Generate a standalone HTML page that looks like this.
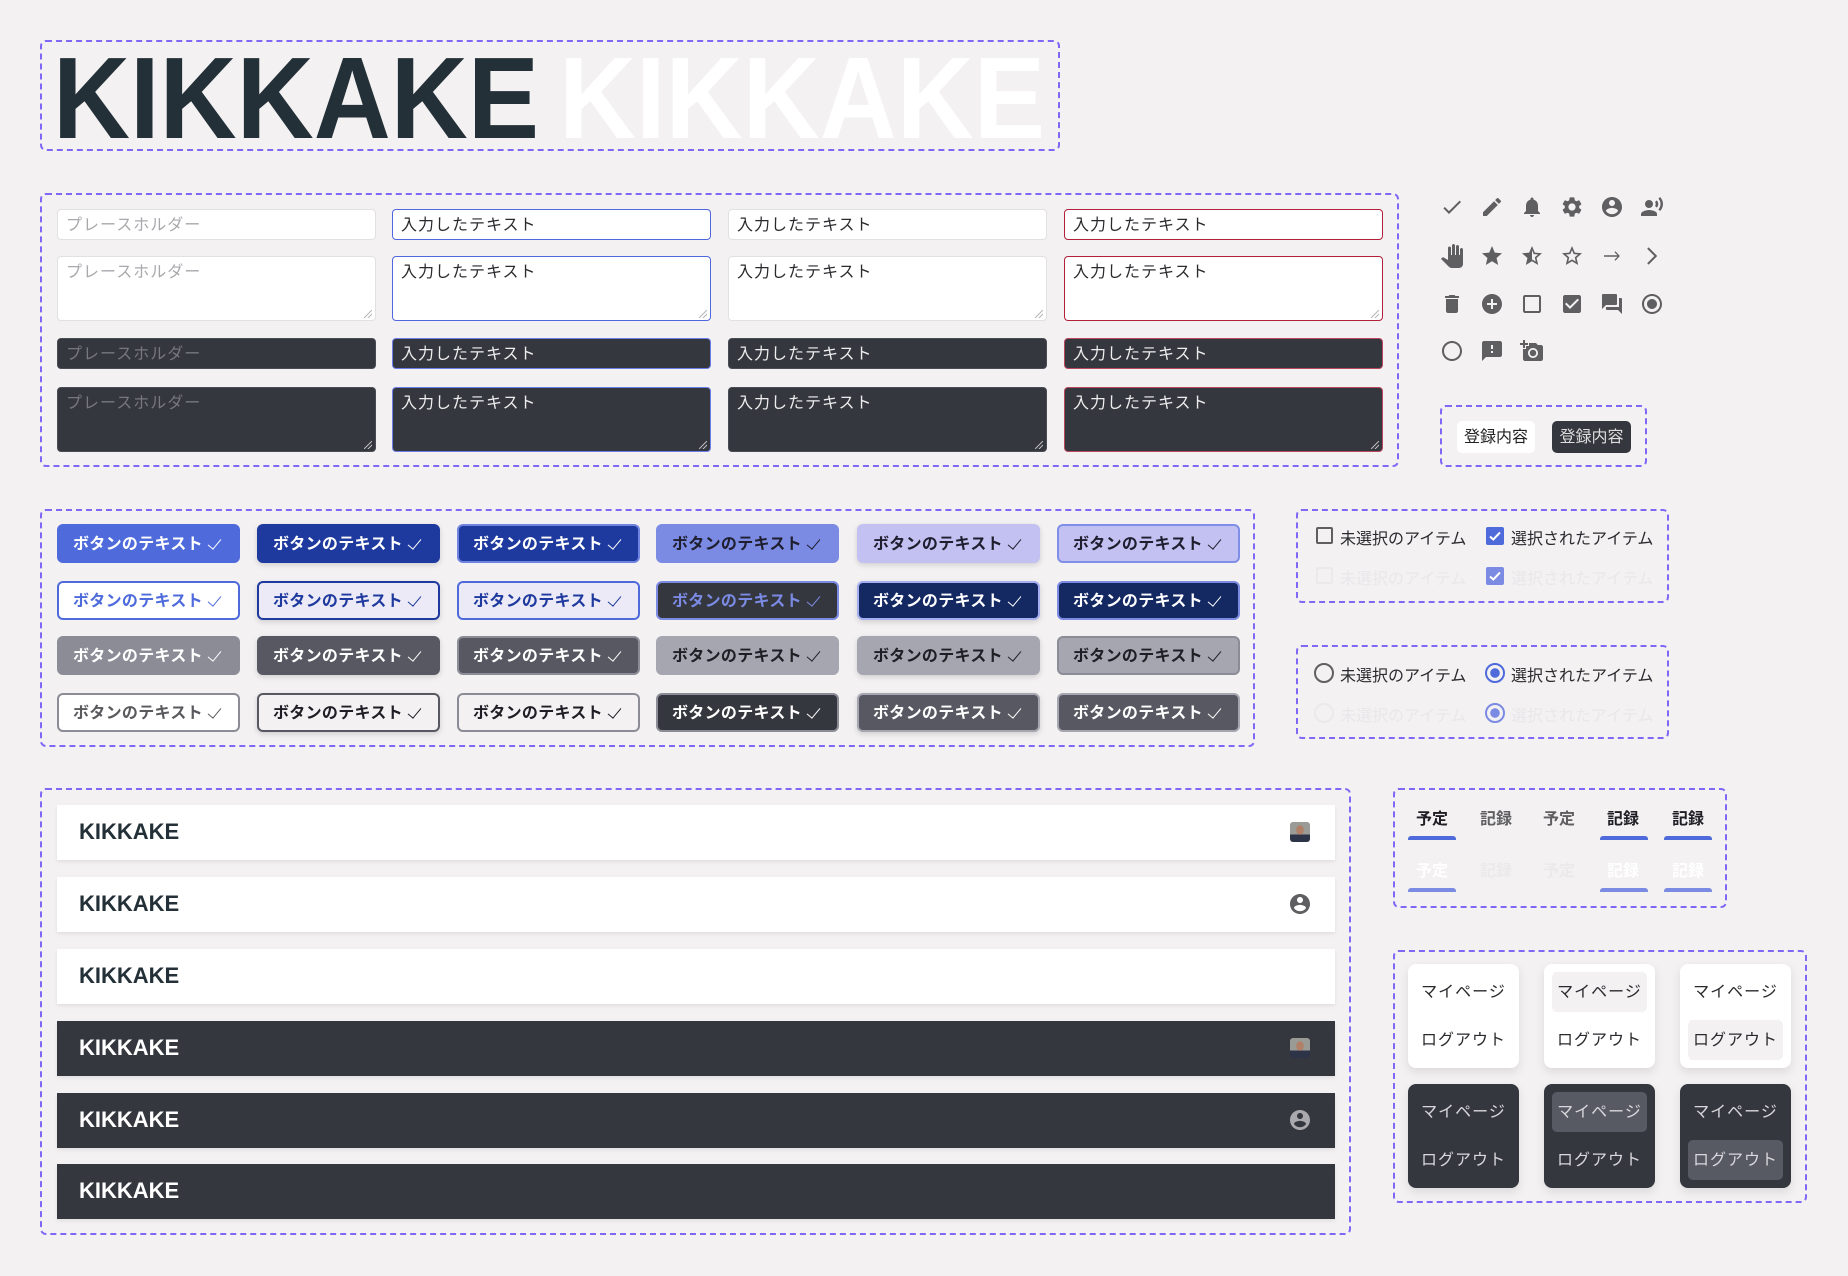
<!DOCTYPE html>
<html><head><meta charset="utf-8"><style>
*{box-sizing:border-box;margin:0;padding:0}
body{width:1848px;height:1276px;background:#f3f1f2;position:relative;overflow:hidden;font-family:"Liberation Sans","Noto Sans CJK JP",sans-serif;color:#1f1f24}
.a{position:absolute}
.box{position:absolute;border:2px dashed #8068f7;border-radius:6px}
.in{position:absolute;width:319px;height:31px;background:#fff;border:1.5px solid #e2e0e2;border-radius:4px;font-size:16px;line-height:18px;padding:7px 8px;color:#2a2a2e;letter-spacing:1px}
.ta{height:65px}
.ph{color:#a9a9ad}
.dk{background:#35373f;border-color:#4a4c55;color:#eee}
.dk.ph{color:#77787f}
.blue{border-color:#5068de}.red{border-color:#b3203a}
.dk.blue{border-color:#6b7de6}.dk.red{border-color:#b9485f}
.rz{position:absolute;right:3px;bottom:2px;width:8px;height:8px;background:linear-gradient(135deg,transparent 45%,#b8b8b8 45%,#b8b8b8 55%,transparent 55%,transparent 70%,#b8b8b8 70%,#b8b8b8 80%,transparent 80%)}
.ic{position:absolute;width:24px;height:24px;fill:#5f5f61}
.bt{position:absolute;width:183px;height:39px;border-radius:6px;font-size:16px;font-weight:bold;line-height:37px;padding-left:14px;letter-spacing:.3px;border:2px solid transparent;white-space:nowrap}
.bt::after{content:"";position:absolute;right:20px;top:10px;width:6px;height:12px;border:solid currentColor;border-width:0 1.6px 1.6px 0;transform:rotate(40deg)}
.sh{box-shadow:0 2px 6px rgba(0,0,0,.15)}
.lbl{position:absolute;font-size:16px;color:#2a2a2e;white-space:nowrap}
.row{position:absolute;left:57px;width:1278px;height:55px;background:#fff;box-shadow:0 2px 4px rgba(0,0,0,.08)}
.row b{position:absolute;left:22px;top:14px;font-size:22px;color:#243038}
.row.d{background:#35373f}.row.d b{color:#fff}
.tab{position:absolute;width:64px;text-align:center;font-size:16px;font-weight:bold}
.ul{position:absolute;width:48px;height:4px;border-radius:3px 3px 0 0}
.card{position:absolute;width:111px;height:104px;background:#fff;border-radius:8px;box-shadow:0 4px 10px rgba(0,0,0,.1)}
.card div{position:absolute;left:8px;width:95px;height:40px;line-height:42px;text-align:center;font-size:16px;border-radius:5px;color:#2a2a2e;letter-spacing:1px}
.card.d{background:#35373f}.card.d div{color:#d8d8dc}
.hl{background:#f3f1f2}.card.d .hl{background:#585a63}
.av{position:absolute;left:1233px;top:17px;width:20px;height:20px;border-radius:3px;background:radial-gradient(ellipse 4px 5px at 50% 40%,#b08068 90%,transparent 100%),linear-gradient(#9a9a96 62%,#2e3448 62%)}
</style></head><body>

<div class="box" style="left:40px;top:40px;width:1020px;height:111px"></div>
<svg class="a" style="left:0;top:0" width="1100" height="160"><g font-family="Liberation Sans Narrow, Liberation Sans, sans-serif" font-weight="bold" font-size="116"><text x="53" y="138" textLength="486" lengthAdjust="spacingAndGlyphs" fill="#243038">KIKKAKE</text><text x="559" y="138" textLength="486" lengthAdjust="spacingAndGlyphs" fill="#fff">KIKKAKE</text></g></svg>

<div class="box" style="left:40px;top:193px;width:1359px;height:274px"></div>
<div class="in ph" style="left:57px;top:209px">プレースホルダー</div>
<div class="in blue" style="left:392px;top:209px">入力したテキスト</div>
<div class="in" style="left:728px;top:209px">入力したテキスト</div>
<div class="in red" style="left:1064px;top:209px">入力したテキスト</div>
<div class="in ta ph" style="left:57px;top:256px">プレースホルダー<span class="rz"></span></div>
<div class="in ta blue" style="left:392px;top:256px">入力したテキスト<span class="rz"></span></div>
<div class="in ta" style="left:728px;top:256px">入力したテキスト<span class="rz"></span></div>
<div class="in ta red" style="left:1064px;top:256px">入力したテキスト<span class="rz"></span></div>
<div class="in dk ph" style="left:57px;top:338px">プレースホルダー</div>
<div class="in dk blue" style="left:392px;top:338px">入力したテキスト</div>
<div class="in dk" style="left:728px;top:338px">入力したテキスト</div>
<div class="in dk red" style="left:1064px;top:338px">入力したテキスト</div>
<div class="in ta dk ph" style="left:57px;top:387px">プレースホルダー<span class="rz"></span></div>
<div class="in ta dk blue" style="left:392px;top:387px">入力したテキスト<span class="rz"></span></div>
<div class="in ta dk" style="left:728px;top:387px">入力したテキスト<span class="rz"></span></div>
<div class="in ta dk red" style="left:1064px;top:387px">入力したテキスト<span class="rz"></span></div>

<!-- icons -->
<svg class="ic" style="left:1440px;top:195px" viewBox="0 0 24 24"><path d="M9 16.17L4.83 12l-1.42 1.41L9 19 21 7l-1.41-1.41z"/></svg>
<svg class="ic" style="left:1480px;top:195px" viewBox="0 0 24 24"><path d="M3 17.25V21h3.75L17.81 9.94l-3.75-3.75L3 17.25zM20.71 7.04c.39-.39.39-1.02 0-1.41l-2.34-2.34c-.39-.39-1.02-.39-1.41 0l-1.83 1.83 3.75 3.75 1.83-1.83z"/></svg>
<svg class="ic" style="left:1520px;top:195px" viewBox="0 0 24 24"><path d="M12 22c1.1 0 2-.9 2-2h-4c0 1.1.89 2 2 2zm6-6v-5c0-3.07-1.64-5.64-4.5-6.32V4c0-.83-.67-1.5-1.5-1.5s-1.5.67-1.5 1.5v.68C7.63 5.36 6 7.92 6 11v5l-2 2v1h16v-1l-2-2z"/></svg>
<svg class="ic" style="left:1560px;top:195px" viewBox="0 0 24 24"><path d="M19.14 12.94c.04-.3.06-.61.06-.94 0-.32-.02-.64-.07-.94l2.03-1.58c.18-.14.23-.41.12-.61l-1.92-3.32c-.12-.22-.37-.29-.59-.22l-2.39.96c-.5-.38-1.03-.7-1.62-.94l-.36-2.54c-.04-.24-.24-.41-.48-.41h-3.84c-.24 0-.43.17-.47.41l-.36 2.54c-.59.24-1.13.57-1.62.94l-2.39-.96c-.22-.08-.47 0-.59.22L2.74 8.87c-.12.21-.08.47.12.61l2.03 1.58c-.05.3-.09.63-.09.94s.02.64.07.94l-2.03 1.58c-.18.14-.23.41-.12.61l1.92 3.32c.12.22.37.29.59.22l2.39-.96c.5.38 1.03.7 1.62.94l.36 2.54c.05.24.24.41.48.41h3.84c.24 0 .44-.17.47-.41l.36-2.54c.59-.24 1.13-.56 1.62-.94l2.39.96c.22.08.47 0 .59-.22l1.92-3.32c.12-.22.07-.47-.12-.61l-2.01-1.58zM12 15.6c-1.98 0-3.6-1.62-3.6-3.6s1.62-3.6 3.6-3.6 3.6 1.62 3.6 3.6-1.62 3.6-3.6 3.6z"/></svg>
<svg class="ic" style="left:1600px;top:195px" viewBox="0 0 24 24"><path d="M12 2C6.48 2 2 6.48 2 12s4.48 10 10 10 10-4.48 10-10S17.52 2 12 2zm0 3c1.66 0 3 1.34 3 3s-1.34 3-3 3-3-1.34-3-3 1.34-3 3-3zm0 14.2c-2.5 0-4.71-1.28-6-3.22.03-1.99 4-3.08 6-3.08 1.99 0 5.97 1.09 6 3.08-1.29 1.94-3.5 3.22-6 3.22z"/></svg>
<svg class="ic" style="left:1640px;top:195px" viewBox="0 0 24 24"><circle cx="9" cy="9" r="4"/><path d="M9 15c-2.67 0-8 1.34-8 4v2h16v-2c0-2.66-5.33-4-8-4z"/><path d="M16.76 5.36l-1.68 1.69c.84 1.18.84 2.71 0 3.89l1.68 1.69c2.02-2.02 2.02-5.07 0-7.27zM20.07 2l-1.63 1.63c2.77 3.02 2.77 7.56 0 10.74L20.07 16c3.9-3.89 3.91-9.95 0-14z"/></svg>

<svg class="ic" style="left:1440px;top:244px" viewBox="0 0 24 24"><path d="M23 5.5V20c0 2.2-1.8 4-4 4h-7.3c-1.08 0-2.1-.43-2.85-1.19L1 14.83s1.26-1.23 1.3-1.25c.22-.19.49-.29.79-.29.22 0 .42.06.6.16.04.01 4.31 2.46 4.31 2.46V4c0-.83.67-1.5 1.5-1.5S11 3.17 11 4v7h1V1.5c0-.83.67-1.5 1.5-1.5S15 .67 15 1.5V11h1V2.5c0-.83.67-1.5 1.5-1.5s1.5.67 1.5 1.5V11h1V5.5c0-.83.67-1.5 1.5-1.5s1.5.67 1.5 1.5z"/></svg>
<svg class="ic" style="left:1480px;top:244px" viewBox="0 0 24 24"><path d="M12 17.27L18.18 21l-1.64-7.03L22 9.24l-7.19-.61L12 2 9.19 8.63 2 9.24l5.46 4.73L5.82 21z"/></svg>
<svg class="ic" style="left:1520px;top:244px" viewBox="0 0 24 24"><path d="M22 9.24l-7.19-.62L12 2 9.19 8.63 2 9.24l5.46 4.73L5.82 21 12 17.27 18.18 21l-1.63-7.03L22 9.24zM12 15.4V6.1l1.71 4.04 4.38.38-3.32 2.88 1 4.28L12 15.4z"/></svg>
<svg class="ic" style="left:1560px;top:244px" viewBox="0 0 24 24"><path d="M22 9.24l-7.19-.62L12 2 9.19 8.63 2 9.24l5.46 4.73L5.82 21 12 17.27 18.18 21l-1.63-7.03L22 9.24zM12 15.4l-3.76 2.27 1-4.28-3.32-2.88 4.38-.38L12 6.1l1.71 4.04 4.38.38-3.32 2.88 1 4.28L12 15.4z"/></svg>
<svg class="ic" style="left:1600px;top:244px" viewBox="0 0 24 24"><path d="M4 11.2h13.5l-3-3 .9-.9 4.5 4.7-4.5 4.7-.9-.9 3-3H4z"/></svg>
<svg class="ic" style="left:1640px;top:244px" viewBox="0 0 24 24"><path d="M8.6 3.4L7.2 4.8 14.4 12l-7.2 7.2 1.4 1.4L17.2 12z"/></svg>

<svg class="ic" style="left:1440px;top:292px" viewBox="0 0 24 24"><path d="M6 19c0 1.1.9 2 2 2h8c1.1 0 2-.9 2-2V7H6v12zM19 4h-3.5l-1-1h-5l-1 1H5v2h14V4z"/></svg>
<svg class="ic" style="left:1480px;top:292px" viewBox="0 0 24 24"><path d="M12 2C6.48 2 2 6.48 2 12s4.48 10 10 10 10-4.48 10-10S17.52 2 12 2zm5 11h-4v4h-2v-4H7v-2h4V7h2v4h4v2z"/></svg>
<svg class="ic" style="left:1520px;top:292px" viewBox="0 0 24 24"><path d="M19 5v14H5V5h14m0-2H5c-1.1 0-2 .9-2 2v14c0 1.1.9 2 2 2h14c1.1 0 2-.9 2-2V5c0-1.1-.9-2-2-2z"/></svg>
<svg class="ic" style="left:1560px;top:292px" viewBox="0 0 24 24"><path d="M19 3H5c-1.11 0-2 .9-2 2v14c0 1.1.89 2 2 2h14c1.11 0 2-.9 2-2V5c0-1.1-.89-2-2-2zm-9 14l-5-5 1.41-1.41L10 14.17l7.59-7.59L19 8l-9 9z"/></svg>
<svg class="ic" style="left:1600px;top:292px" viewBox="0 0 24 24"><path d="M21 6h-2v9H6v2c0 .55.45 1 1 1h11l4 4V7c0-.55-.45-1-1-1zm-4 6V3c0-.55-.45-1-1-1H3c-.55 0-1 .45-1 1v14l4-4h10c.55 0 1-.45 1-1z"/></svg>
<svg class="ic" style="left:1640px;top:292px" viewBox="0 0 24 24"><path d="M12 7c-2.76 0-5 2.24-5 5s2.24 5 5 5 5-2.24 5-5-2.24-5-5-5zm0-5C6.48 2 2 6.48 2 12s4.48 10 10 10 10-4.48 10-10S17.52 2 12 2zm0 18c-4.42 0-8-3.58-8-8s3.58-8 8-8 8 3.58 8 8-3.58 8-8 8z"/></svg>

<svg class="ic" style="left:1440px;top:339px" viewBox="0 0 24 24"><path d="M12 2C6.48 2 2 6.48 2 12s4.48 10 10 10 10-4.48 10-10S17.52 2 12 2zm0 18c-4.42 0-8-3.58-8-8s3.58-8 8-8 8 3.58 8 8-3.58 8-8 8z"/></svg>
<svg class="ic" style="left:1480px;top:339px" viewBox="0 0 24 24"><path d="M20 2H4c-1.1 0-1.99.9-1.99 2L2 22l4-4h14c1.1 0 2-.9 2-2V4c0-1.1-.9-2-2-2zm-7 12h-2v-2h2v2zm0-4h-2V6h2v4z"/></svg>
<svg class="ic" style="left:1520px;top:339px" viewBox="0 0 24 24"><path d="M3 4V1h2v3h3v2H5v3H3V6H0V4h3zm3 6V7h3V4h7l1.83 2H21c1.1 0 2 .9 2 2v12c0 1.1-.9 2-2 2H5c-1.1 0-2-.9-2-2V10h3zm7 9c2.76 0 5-2.24 5-5s-2.24-5-5-5-5 2.24-5 5 2.24 5 5 5zm-3.2-5c0 1.77 1.43 3.2 3.2 3.2s3.2-1.43 3.2-3.2-1.43-3.2-3.2-3.2-3.2 1.43-3.2 3.2z"/></svg>

<div class="box" style="left:1440px;top:405px;width:207px;height:62px"></div>
<div class="a" style="left:1457px;top:421px;width:78px;height:32px;background:#fff;border-radius:5px;font-size:16px;line-height:34px;text-align:center;color:#222">登録内容</div>
<div class="a" style="left:1552px;top:421px;width:79px;height:32px;background:#35373f;border-radius:5px;font-size:16px;line-height:34px;text-align:center;color:#ddd">登録内容</div>

<!-- buttons -->
<div class="box" style="left:40px;top:509px;width:1215px;height:238px"></div>
<div class="bt" style="left:57px;top:524px;background:#4f6bdb;color:#fff">ボタンのテキスト</div>
<div class="bt sh" style="left:257px;top:524px;background:#1f3a9e;color:#fff">ボタンのテキスト</div>
<div class="bt" style="left:457px;top:524px;background:#1f3a9e;border-color:#6f83e0;color:#fff">ボタンのテキスト</div>
<div class="bt" style="left:656px;top:524px;background:#7b8ae3;color:#1e1e2e">ボタンのテキスト</div>
<div class="bt sh" style="left:857px;top:524px;background:#c3c0f2;color:#1e1e2e">ボタンのテキスト</div>
<div class="bt" style="left:1057px;top:524px;background:#c3c0f2;border-color:#7f8ee6;color:#1e1e2e">ボタンのテキスト</div>

<div class="bt" style="left:57px;top:581px;background:#fff;border-color:#4f6bdb;color:#4f6bdb">ボタンのテキスト</div>
<div class="bt sh" style="left:257px;top:581px;background:#eceaf7;border-color:#1f3a9e;color:#1f3a9e">ボタンのテキスト</div>
<div class="bt" style="left:457px;top:581px;background:#eceaf7;border-color:#4f6bdb;color:#1f3a9e">ボタンのテキスト</div>
<div class="bt" style="left:656px;top:581px;background:#35373f;border-color:#7b8ae3;color:#7b8ae3">ボタンのテキスト</div>
<div class="bt sh" style="left:857px;top:581px;background:#142862;border-color:#a5aef0;color:#fff">ボタンのテキスト</div>
<div class="bt" style="left:1057px;top:581px;background:#142862;border-color:#7b8ae3;color:#fff">ボタンのテキスト</div>

<div class="bt" style="left:57px;top:636px;background:#8b8c96;color:#fff">ボタンのテキスト</div>
<div class="bt sh" style="left:257px;top:636px;background:#575861;color:#fff">ボタンのテキスト</div>
<div class="bt" style="left:457px;top:636px;background:#575861;border-color:#8b8c96;color:#fff">ボタンのテキスト</div>
<div class="bt" style="left:656px;top:636px;background:#a6a6b0;color:#1e1e24">ボタンのテキスト</div>
<div class="bt sh" style="left:857px;top:636px;background:#a6a6b0;color:#1e1e24">ボタンのテキスト</div>
<div class="bt" style="left:1057px;top:636px;background:#a6a6b0;border-color:#8b8c96;color:#1e1e24">ボタンのテキスト</div>

<div class="bt" style="left:57px;top:693px;background:#fff;border-color:#8b8c96;color:#5a5a5e">ボタンのテキスト</div>
<div class="bt sh" style="left:257px;top:693px;background:#f3f1f2;border-color:#575861;color:#1e1e24">ボタンのテキスト</div>
<div class="bt" style="left:457px;top:693px;background:#f3f1f2;border-color:#8b8c96;color:#1e1e24">ボタンのテキスト</div>
<div class="bt" style="left:656px;top:693px;background:#35373f;border-color:#8b8c96;color:#fff">ボタンのテキスト</div>
<div class="bt sh" style="left:857px;top:693px;background:#575861;border-color:#a6a6b0;color:#fff">ボタンのテキスト</div>
<div class="bt" style="left:1057px;top:693px;background:#575861;border-color:#a6a6b0;color:#fff">ボタンのテキスト</div>

<!-- checkboxes -->
<div class="box" style="left:1296px;top:509px;width:373px;height:94px"></div>
<div class="a" style="left:1316px;top:527px;width:17px;height:17px;border:2px solid #5f5f61;border-radius:2px"></div>
<div class="lbl" style="left:1340px;top:525px">未選択のアイテム</div>
<svg class="a" style="left:1486px;top:527px" width="18" height="18" viewBox="0 0 18 18"><rect width="18" height="18" rx="2" fill="#4f6bdb"/><path d="M4 9.5l3.3 3L14 5.5" stroke="#fff" stroke-width="2" fill="none"/></svg>
<div class="lbl" style="left:1511px;top:525px">選択されたアイテム</div>
<div class="a" style="left:1316px;top:567px;width:17px;height:17px;border:2px solid #ebe9ea;border-radius:2px"></div>
<div class="lbl" style="left:1340px;top:565px;color:#e9e7e9">未選択のアイテム</div>
<svg class="a" style="left:1486px;top:567px" width="18" height="18" viewBox="0 0 18 18"><rect width="18" height="18" rx="2" fill="#7b8ae3"/><path d="M4 9.5l3.3 3L14 5.5" stroke="#fff" stroke-width="2" fill="none"/></svg>
<div class="lbl" style="left:1511px;top:565px;color:#e9e7e9">選択されたアイテム</div>

<div class="box" style="left:1296px;top:645px;width:373px;height:94px"></div>
<div class="a" style="left:1314px;top:663px;width:20px;height:20px;border:2px solid #5f5f61;border-radius:50%"></div>
<div class="lbl" style="left:1340px;top:662px">未選択のアイテム</div>
<div class="a" style="left:1485px;top:663px;width:20px;height:20px;border:2px solid #4f6bdb;border-radius:50%;background:radial-gradient(#4f6bdb 4.5px,transparent 5px)"></div>
<div class="lbl" style="left:1511px;top:662px">選択されたアイテム</div>
<div class="a" style="left:1314px;top:703px;width:20px;height:20px;border:2px solid #ebe9ea;border-radius:50%"></div>
<div class="lbl" style="left:1340px;top:702px;color:#e9e7e9">未選択のアイテム</div>
<div class="a" style="left:1485px;top:703px;width:20px;height:20px;border:2px solid #7b8ae3;border-radius:50%;background:radial-gradient(#7b8ae3 4.5px,transparent 5px)"></div>
<div class="lbl" style="left:1511px;top:702px;color:#e9e7e9">選択されたアイテム</div>

<!-- list -->
<div class="box" style="left:40px;top:788px;width:1311px;height:447px"></div>
<div class="row" style="top:805px"><b>KIKKAKE</b><div class="av"></div></div>
<div class="row" style="top:877px"><b>KIKKAKE</b><svg class="a" style="left:1231px;top:15px;fill:#5f5f61" width="24" height="24" viewBox="0 0 24 24"><path d="M12 2C6.48 2 2 6.48 2 12s4.48 10 10 10 10-4.48 10-10S17.52 2 12 2zm0 3c1.66 0 3 1.34 3 3s-1.34 3-3 3-3-1.34-3-3 1.34-3 3-3zm0 14.2c-2.5 0-4.71-1.28-6-3.22.03-1.99 4-3.08 6-3.08 1.99 0 5.97 1.09 6 3.08-1.29 1.94-3.5 3.22-6 3.22z"/></svg></div>
<div class="row" style="top:949px"><b>KIKKAKE</b></div>
<div class="row d" style="top:1021px"><b>KIKKAKE</b><div class="av"></div></div>
<div class="row d" style="top:1093px"><b>KIKKAKE</b><svg class="a" style="left:1231px;top:15px;fill:#a9a9ae" width="24" height="24" viewBox="0 0 24 24"><path d="M12 2C6.48 2 2 6.48 2 12s4.48 10 10 10 10-4.48 10-10S17.52 2 12 2zm0 3c1.66 0 3 1.34 3 3s-1.34 3-3 3-3-1.34-3-3 1.34-3 3-3zm0 14.2c-2.5 0-4.71-1.28-6-3.22.03-1.99 4-3.08 6-3.08 1.99 0 5.97 1.09 6 3.08-1.29 1.94-3.5 3.22-6 3.22z"/></svg></div>
<div class="row d" style="top:1164px"><b>KIKKAKE</b></div>

<!-- tabs -->
<div class="box" style="left:1393px;top:788px;width:334px;height:120px"></div>
<div class="tab" style="left:1400px;top:805px;color:#1e1e24">予定</div>
<div class="tab" style="left:1464px;top:805px;color:#5f5f61">記録</div>
<div class="tab" style="left:1527px;top:805px;color:#5f5f61">予定</div>
<div class="tab" style="left:1591px;top:805px;color:#1e1e24">記録</div>
<div class="tab" style="left:1656px;top:805px;color:#1e1e24">記録</div>
<div class="ul" style="left:1408px;top:836px;background:#4f6bdb"></div>
<div class="ul" style="left:1600px;top:836px;background:#4f6bdb"></div>
<div class="ul" style="left:1664px;top:836px;background:#4f6bdb"></div>
<div class="tab" style="left:1400px;top:857px;color:#fff">予定</div>
<div class="tab" style="left:1464px;top:857px;color:#ebe9ea">記録</div>
<div class="tab" style="left:1527px;top:857px;color:#ebe9ea">予定</div>
<div class="tab" style="left:1591px;top:857px;color:#fff">記録</div>
<div class="tab" style="left:1656px;top:857px;color:#fff">記録</div>
<div class="ul" style="left:1408px;top:888px;background:#7b8ae3"></div>
<div class="ul" style="left:1600px;top:888px;background:#7b8ae3"></div>
<div class="ul" style="left:1664px;top:888px;background:#7b8ae3"></div>

<!-- menus -->
<div class="box" style="left:1393px;top:950px;width:414px;height:253px"></div>
<div class="card" style="left:1408px;top:964px"><div style="top:8px">マイページ</div><div style="top:56px">ログアウト</div></div>
<div class="card" style="left:1544px;top:964px"><div class="hl" style="top:8px">マイページ</div><div style="top:56px">ログアウト</div></div>
<div class="card" style="left:1680px;top:964px"><div style="top:8px">マイページ</div><div class="hl" style="top:56px">ログアウト</div></div>
<div class="card d" style="left:1408px;top:1084px"><div style="top:8px">マイページ</div><div style="top:56px">ログアウト</div></div>
<div class="card d" style="left:1544px;top:1084px"><div class="hl" style="top:8px">マイページ</div><div style="top:56px">ログアウト</div></div>
<div class="card d" style="left:1680px;top:1084px"><div style="top:8px">マイページ</div><div class="hl" style="top:56px">ログアウト</div></div>
</body></html>
